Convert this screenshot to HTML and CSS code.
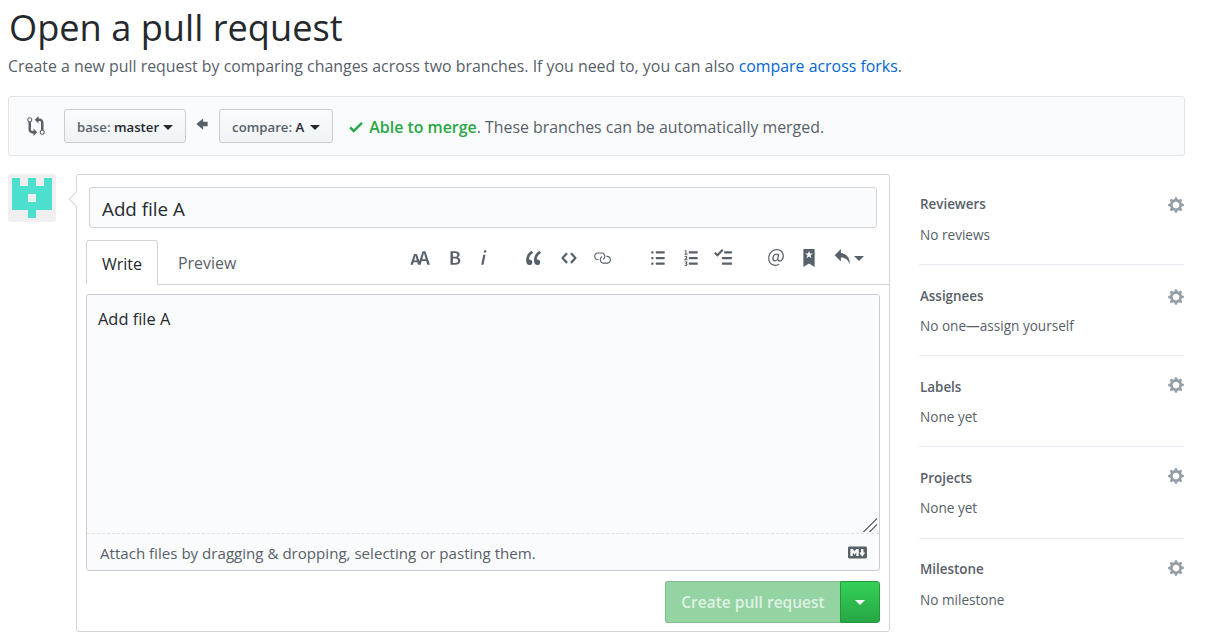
FILE: index.html
```html
<!DOCTYPE html>
<html lang="en">

<head>
    <meta charset="UTF-8">
    <title>Open a pull request</title>
    <link rel="stylesheet" href="styles.css">
</head>

<body>
    <h1>Open a pull request</h1>
    <p class="lead">Create a new pull request by comparing changes across two branches. If you need to, you can also <a href="#">compare across forks</a>.</p>

    <div class="range">
        <svg class="compare-icon" viewBox="0 0 14 16"><path d="M5 12H4c-.27-.02-.48-.11-.69-.31-.21-.2-.3-.42-.31-.69V4.72A1.993 1.993 0 0 0 2 1a1.993 1.993 0 0 0-1 3.72V11c.03.78.34 1.47.94 2.06.6.59 1.28.91 2.06.94h1v2l3-3-3-3v2zM2 1.8c.66 0 1.2.55 1.2 1.2 0 .65-.55 1.2-1.2 1.2C1.35 4.2.8 3.65.8 3c0-.65.55-1.2 1.2-1.2zm11 9.48V5c-.03-.78-.34-1.47-.94-2.06-.6-.59-1.28-.91-2.06-.94H9V0L6 3l3 3V4h1c.27.02.48.11.69.31.21.2.3.42.31.69v6.28A1.993 1.993 0 0 0 12 15a1.993 1.993 0 0 0 1-3.72zm-1 2.92c-.66 0-1.2-.55-1.2-1.2 0-.65.55-1.2 1.2-1.2.65 0 1.2.55 1.2 1.2 0 .65-.55 1.2-1.2 1.2z"/></svg>
        <button class="branch">base: <b>master</b><span class="caret"></span></button>
        <svg class="arrow-icon" viewBox="0 0 10 16"><path d="M6 3L0 8l6 5v-3h4V6H6z"/></svg>
        <button class="branch compare">compare: <b>A</b><span class="caret"></span></button>
        <div class="merge-status">
            <svg class="check-icon" viewBox="0 0 12 16"><path d="M12 5l-8 8-4-4 1.5-1.5L4 10l6.5-6.5z"/></svg>
            <strong>Able to merge</strong>. These branches can be automatically merged.
        </div>
    </div>

    <div class="main">
        <svg class="avatar" viewBox="0 0 48 48">
            <rect width="48" height="48" rx="3" fill="#f0f0f0"/>
            <path fill="#4ddfcd" fill-rule="evenodd" d="M4 4h8v8h8V4h8v8h8V4h8v32H28v8h-8v-8H4zM20 20v8h8v-8z"/>
        </svg>

        <div class="form-box">
            <input class="title-input" type="text" value="Add file A">

            <div class="tabs">
                <div class="tab active">Write</div>
                <div class="tab">Preview</div>
                <div class="toolbar">
                    <div class="tool-group">
                        <svg class="tool" width="21" viewBox="0 0 18 16"><path d="M13.62 9.08L12.1 3.66h-.06l-1.5 5.42h3.08zM5.7 10.13S4.68 6.52 4.53 6.02h-.08l-1.13 4.11H5.7zM17.31 14h-2.25l-.95-3.25h-4.07L9.09 14H6.84l-.69-2.33H2.87L2.17 14H0l3.3-9.59h2.5l2.17 6.34L10.86 2h2.52l3.94 12h-.01z"/></svg>
                        <svg class="tool" width="12" viewBox="0 0 10 16"><path d="M1 2h3.83c2.48 0 4.3.75 4.3 2.95 0 1.14-.63 2.23-1.67 2.61v.06c1.33.3 2.3 1.23 2.3 2.86 0 2.39-1.97 3.52-4.61 3.52H1V2zm3.66 4.95c1.67 0 2.38-.66 2.38-1.69 0-1.17-.78-1.61-2.34-1.61H3.13v3.3h1.53zm.27 5.39c1.77 0 2.75-.64 2.75-1.98 0-1.27-.95-1.81-2.75-1.81h-1.8v3.8h1.8v-.01z"/></svg>
                        <svg class="tool" width="7" viewBox="0 0 6 16"><path d="M2.81 5h1.98L3 14H1l1.81-9zm.36-2.7c0-.7.58-1.3 1.33-1.3.56 0 1.13.38 1.13 1.03 0 .75-.59 1.3-1.33 1.3-.58 0-1.13-.38-1.13-1.03z"/></svg>
                    </div>
                    <div class="tool-group">
                        <svg class="tool" width="16" viewBox="0 0 14 16"><path d="M6.16 3.5C3.73 5.06 2.55 6.67 2.55 9.36c.16-.05.3-.05.44-.05 1.27 0 2.5.86 2.5 2.41 0 1.61-1.03 2.61-2.5 2.61-1.9 0-2.99-1.52-2.99-4.25 0-3.8 1.75-6.53 5.02-8.42L6.16 3.5zm7 0c-2.43 1.56-3.61 3.17-3.61 5.86.16-.05.3-.05.44-.05 1.27 0 2.5.86 2.5 2.41 0 1.61-1.03 2.61-2.5 2.61-1.89 0-2.98-1.52-2.98-4.25 0-3.8 1.75-6.53 5.02-8.42l1.14 1.84h-.01z"/></svg>
                        <svg class="tool" width="16" viewBox="0 0 14 16"><path d="M9.5 3L8 4.5 11.5 8 8 11.5 9.5 13 14 8 9.5 3zm-5 0L0 8l4.5 5L6 11.5 2.5 8 6 4.5 4.5 3z"/></svg>
                        <svg class="tool" width="18" viewBox="0 0 16 16"><path d="M4 9h1v1H4c-1.5 0-3-1.69-3-3.5S2.55 3 4 3h4c1.45 0 3 1.69 3 3.5 0 1.41-.91 2.72-2 3.25V8.59c.58-.45 1-1.27 1-2.09C10 5.22 8.98 4 8 4H4c-.98 0-2 1.22-2 2.5S3 9 4 9zm9-3h-1v1h1c1 0 2 1.22 2 2.5S13.98 12 13 12H9c-.98 0-2-1.22-2-2.5 0-.83.42-1.64 1-2.09V6.25c-1.09.53-2 1.84-2 3.25C6 11.31 7.55 13 9 13h4c1.45 0 3-1.69 3-3.5S14.5 6 13 6z"/></svg>
                    </div>
                    <div class="tool-group">
                        <svg class="tool" width="14" viewBox="0 0 12 16"><path d="M2 13c0 .59 0 1-.59 1H.59C0 14 0 13.59 0 13c0-.59 0-1 .59-1h.81c.59 0 .59.41.59 1H2zm2.59-9h6.81c.59 0 .59-.41.59-1 0-.59 0-1-.59-1H4.59C4 2 4 2.41 4 3c0 .59 0 1 .59 1zM1.41 7H.59C0 7 0 7.41 0 8c0 .59 0 1 .59 1h.81c.59 0 .59-.41.59-1 0-.59 0-1-.59-1h.01zm0-5H.59C0 2 0 2.41 0 3c0 .59 0 1 .59 1h.81c.59 0 .59-.41.59-1 0-.59 0-1-.59-1h.01zm10 5H4.59C4 7 4 7.41 4 8c0 .59 0 1 .59 1h6.81c.59 0 .59-.41.59-1 0-.59 0-1-.59-1h.01zm0 5H4.59C4 12 4 12.41 4 13c0 .59 0 1 .59 1h6.81c.59 0 .59-.41.59-1 0-.59 0-1-.59-1h.01z"/></svg>
                        <svg class="tool" width="14" viewBox="0 0 12 16"><path d="M12.01 13c0 .59 0 1-.59 1H4.6c-.59 0-.59-.41-.59-1 0-.59 0-1 .59-1h6.81c.59 0 .59.41.59 1h.01zM4.6 4h6.81c.59 0 .59-.41.59-1 0-.59 0-1-.59-1H4.6c-.59 0-.59.41-.59 1 0 .59 0 1 .59 1zm6.81 3H4.6c-.59 0-.59.41-.59 1 0 .59 0 1 .59 1h6.81c.59 0 .59-.41.59-1 0-.59 0-1-.59-1zm-9.4-6h-.72c-.3.19-.58.25-1.03.34V2h.75v2.14H.17V5h2.84v-.86h-1V1zm.392 8.12c-.129 0-.592.04-.802.07.53-.56 1.14-1.25 1.14-1.89C2.72 6.52 2.18 6 1.38 6 .8 6 .42 6.2 0 6.67l.58.58c.19-.19.38-.38.64-.38.28 0 .48.16.48.52 0 .53-.77 1.2-1.7 2.06V10h3v-.88h-.598zm-.222 3.79v-.03c.44-.19.64-.47.64-.86 0-.7-.56-1.11-1.44-1.11-.48 0-.89.19-1.28.52l.55.64c.25-.2.44-.31.69-.31.27 0 .42.13.42.36 0 .27-.2.44-.86.44v.75c.83 0 .98.17.98.47 0 .25-.23.38-.58.38-.28 0-.56-.14-.81-.38l-.48.66c.3.36.77.56 1.41.56.83 0 1.53-.41 1.53-1.16-.02-.45-.27-.75-.77-.89v.02z"/></svg>
                        <svg class="tool" width="18" viewBox="0 0 16 16"><path d="M15.41 9H7.59C7 9 7 8.59 7 8c0-.59 0-1 .59-1h7.81c.59 0 .59.41.59 1 0 .59 0 1-.59 1h.01zM9.59 4C9 4 9 3.59 9 3c0-.59 0-1 .59-1h5.81c.59 0 .59.41.59 1 0 .59 0 1-.59 1H9.59zM0 3.91l1.41-1.3L3 4.2 7.09 0 8.5 1.41 3 6.91l-3-3zM7.59 12h7.81c.59 0 .59.41.59 1 0 .59 0 1-.59 1H7.59C7 14 7 13.59 7 13c0-.59 0-1 .59-1z"/></svg>
                    </div>
                    <div class="tool-group">
                        <svg class="tool" width="16" viewBox="0 0 14 16"><path d="M6.58 15c1.25 0 2.52-.31 3.56-.94l-.42-.94c-.84.52-1.89.83-3.03.83-3.23 0-5.64-2.08-5.64-5.72 0-4.37 3.23-7.18 6.58-7.18 3.45 0 5.22 2.19 5.22 5.2 0 2.39-1.34 3.86-2.5 3.86-1.05 0-1.36-.73-1.05-2.19l.73-3.75H8.98l-.11.72c-.41-.63-.94-.83-1.56-.83-2.19 0-3.66 2.39-3.66 4.38 0 1.67.94 2.61 2.3 2.61.84 0 1.67-.53 2.3-1.25.11.94.94 1.45 1.98 1.45 1.67 0 3.77-1.67 3.77-5C14 2.61 11.59 0 7.83 0 3.66 0 0 3.33 0 8.33 0 12.71 2.92 15 6.58 15zm-.31-5c-.73 0-1.36-.52-1.36-1.67 0-1.45.94-3.22 2.41-3.22.52 0 .84.2 1.25.83l-.52 3.02c-.63.73-1.25 1.04-1.78 1.04z"/></svg>
                        <svg class="tool" width="12" viewBox="0 0 10 16"><path d="M9 0H1C.27 0 0 .27 0 1v15l5-3.09L10 16V1c0-.73-.27-1-1-1zm-.78 4.25L6.36 5.61l.72 2.16c.06.22-.02.28-.2.17L5 6.6 3.12 7.94c-.19.11-.25.05-.2-.17l.72-2.16-1.86-1.36c-.17-.16-.14-.23.09-.23l2.3-.03.7-2.16h.25l.7 2.16 2.3.03c.23 0 .27.08.09.23h.01z"/></svg>
                        <div class="reply-tool">
                            <svg class="tool" width="16" viewBox="0 0 14 16"><path d="M6 3.5c3.92.44 8 3.125 8 10-2.312-5.062-4.75-6-8-6V11L.5 5.5 6 0v3.5z"/></svg>
                            <span class="caret"></span>
                        </div>
                    </div>
                </div>
            </div>

            <div class="write-area">
                <textarea class="body-input">Add file A</textarea>
                <div class="drag-hint">
                    <span>Attach files by dragging &amp; dropping, selecting or pasting them.</span>
                    <svg class="md-icon" viewBox="0 0 16 16"><path d="M14.85 3H1.15C.52 3 0 3.52 0 4.15v7.69C0 12.48.52 13 1.15 13h13.69c.64 0 1.15-.52 1.15-1.15v-7.7C16 3.52 15.48 3 14.85 3zM9 11H7V8L5.5 9.92 4 8v3H2V5h2l1.5 2L7 5h2v6zm2.99.5L9.5 8H11V5h2v3h1.5l-2.51 3.5z"/></svg>
                </div>
            </div>

            <div class="form-actions">
                <button class="btn-create" disabled>Create pull request</button>
                <button class="btn-drop"><span class="caret"></span></button>
            </div>
        </div>

        <div class="sidebar">
            <div class="side-item">
                <div class="side-head">Reviewers <svg class="gear" viewBox="0 0 14 16"><path d="M14 8.77v-1.6l-1.94-.64-.45-1.09.88-1.84-1.13-1.13-1.81.91-1.09-.45-.69-1.92h-1.6l-.63 1.94-1.11.45-1.84-.88-1.13 1.13.91 1.81-.45 1.09L0 7.23v1.59l1.94.64.45 1.09-.88 1.84 1.13 1.13 1.81-.91 1.09.45.69 1.92h1.59l.63-1.94 1.11-.45 1.84.88 1.13-1.13-.92-1.81.47-1.09L14 8.75v.02zM7 11c-1.66 0-3-1.34-3-3s1.34-3 3-3 3 1.34 3 3-1.34 3-3 3z"/></svg></div>
                <div class="side-text">No reviews</div>
            </div>
            <div class="side-item">
                <div class="side-head">Assignees <svg class="gear" viewBox="0 0 14 16"><path d="M14 8.77v-1.6l-1.94-.64-.45-1.09.88-1.84-1.13-1.13-1.81.91-1.09-.45-.69-1.92h-1.6l-.63 1.94-1.11.45-1.84-.88-1.13 1.13.91 1.81-.45 1.09L0 7.23v1.59l1.94.64.45 1.09-.88 1.84 1.13 1.13 1.81-.91 1.09.45.69 1.92h1.59l.63-1.94 1.11-.45 1.84.88 1.13-1.13-.92-1.81.47-1.09L14 8.75v.02zM7 11c-1.66 0-3-1.34-3-3s1.34-3 3-3 3 1.34 3 3-1.34 3-3 3z"/></svg></div>
                <div class="side-text">No one—assign yourself</div>
            </div>
            <div class="side-item">
                <div class="side-head">Labels <svg class="gear" viewBox="0 0 14 16"><path d="M14 8.77v-1.6l-1.94-.64-.45-1.09.88-1.84-1.13-1.13-1.81.91-1.09-.45-.69-1.92h-1.6l-.63 1.94-1.11.45-1.84-.88-1.13 1.13.91 1.81-.45 1.09L0 7.23v1.59l1.94.64.45 1.09-.88 1.84 1.13 1.13 1.81-.91 1.09.45.69 1.92h1.59l.63-1.94 1.11-.45 1.84.88 1.13-1.13-.92-1.81.47-1.09L14 8.75v.02zM7 11c-1.66 0-3-1.34-3-3s1.34-3 3-3 3 1.34 3 3-1.34 3-3 3z"/></svg></div>
                <div class="side-text">None yet</div>
            </div>
            <div class="side-item">
                <div class="side-head">Projects <svg class="gear" viewBox="0 0 14 16"><path d="M14 8.77v-1.6l-1.94-.64-.45-1.09.88-1.84-1.13-1.13-1.81.91-1.09-.45-.69-1.92h-1.6l-.63 1.94-1.11.45-1.84-.88-1.13 1.13.91 1.81-.45 1.09L0 7.23v1.59l1.94.64.45 1.09-.88 1.84 1.13 1.13 1.81-.91 1.09.45.69 1.92h1.59l.63-1.94 1.11-.45 1.84.88 1.13-1.13-.92-1.81.47-1.09L14 8.75v.02zM7 11c-1.66 0-3-1.34-3-3s1.34-3 3-3 3 1.34 3 3-1.34 3-3 3z"/></svg></div>
                <div class="side-text">None yet</div>
            </div>
            <div class="side-item">
                <div class="side-head">Milestone <svg class="gear" viewBox="0 0 14 16"><path d="M14 8.77v-1.6l-1.94-.64-.45-1.09.88-1.84-1.13-1.13-1.81.91-1.09-.45-.69-1.92h-1.6l-.63 1.94-1.11.45-1.84-.88-1.13 1.13.91 1.81-.45 1.09L0 7.23v1.59l1.94.64.45 1.09-.88 1.84 1.13 1.13 1.81-.91 1.09.45.69 1.92h1.59l.63-1.94 1.11-.45 1.84.88 1.13-1.13-.92-1.81.47-1.09L14 8.75v.02zM7 11c-1.66 0-3-1.34-3-3s1.34-3 3-3 3 1.34 3 3-1.34 3-3 3z"/></svg></div>
                <div class="side-text">No milestone</div>
            </div>
        </div>
    </div>
</body>

</html>
```

FILE: styles.css
```css
body {
    font-family: "Open Sans", "Noto Sans", sans-serif;
    font-size: 16px;
    color: #24292e;
    margin: 0;
    padding: 0 25px 0 8px;
    background: #fff;
}

h1 {
    font-size: 36.2px;
    font-weight: 400;
    line-height: 44px;
    margin: 5px 0 0;
    padding-left: 1px;
}

.lead {
    font-size: 15.9px;
    line-height: 22px;
    color: #586069;
    margin: 6px 0 19px;
}

.lead a {
    color: #0366d6;
    text-decoration: none;
}

/* compare bar */
.range {
    display: flex;
    align-items: center;
    height: 60px;
    box-sizing: border-box;
    padding-left: 18px;
    background: #fafbfc;
    border: 1px solid #e1e4e8;
    border-radius: 3px;
}

.compare-icon {
    width: 18px;
    height: 20px;
    fill: #586069;
    margin-right: 19px;
}

.branch {
    height: 34px;
    padding: 1px 12px 0;
    font: 600 13.2px "Open Sans", "Noto Sans", sans-serif;
    color: #586069;
    background: linear-gradient(#fafbfc, #eff3f6);
    border: 1px solid #c9ccd0;
    border-radius: 3px;
}

.branch b {
    color: #24292e;
    font-weight: 600;
}

.branch.compare .caret {
    margin-left: 6px;
}

.caret {
    display: inline-block;
    width: 0;
    height: 0;
    margin-left: 4px;
    vertical-align: middle;
    border-style: solid;
    border-width: 5px 5px 0;
    border-color: #24292e transparent transparent;
}

.arrow-icon {
    width: 12px;
    height: 18px;
    fill: #586069;
    margin: -4px 11px 0 10px;
}

.merge-status {
    margin-left: 16px;
    padding-top: 1px;
    font-size: 15.9px;
    color: #586069;
}

.merge-status strong {
    color: #28a745;
    font-weight: 600;
}

.check-icon {
    width: 14px;
    height: 18px;
    margin-right: 2px;
    fill: #28a745;
    vertical-align: -3px;
}

/* main area */
.main {
    display: flex;
    align-items: flex-start;
    margin-top: 18px;
}

.avatar {
    width: 48px;
    height: 48px;
    flex: none;
}

.form-box {
    position: relative;
    width: 814px;
    height: 458px;
    box-sizing: border-box;
    margin-left: 20px;
    padding: 12px 9px 0;
    border: 1px solid #d1d5da;
    border-radius: 3px;
    background: #fff;
}

.form-box::before {
    content: "";
    position: absolute;
    top: 18px;
    left: -6px;
    width: 11px;
    height: 11px;
    background: #fff;
    border-left: 1px solid #d1d5da;
    border-bottom: 1px solid #d1d5da;
    transform: rotate(45deg);
}

.title-input {
    display: block;
    box-sizing: border-box;
    width: 788px;
    height: 41px;
    margin-left: 3px;
    padding: 2px 12px 0;
    font: 18.8px "Open Sans", "Noto Sans", sans-serif;
    color: #24292e;
    background: #fafbfc;
    border: 1px solid #d1d5da;
    border-radius: 3px;
}

.tabs {
    display: flex;
    align-items: flex-end;
    height: 45px;
    margin: 11px -9px 0 0;
    border-bottom: 1px solid #d1d5da;
}

.tab {
    height: 45px;
    box-sizing: border-box;
    padding: 0 19px;
    line-height: 47px;
    font-size: 15.9px;
    color: #586069;
    border: 1px solid transparent;
}

.tab.active {
    height: 45px;
    margin-bottom: -1px;
    padding: 0 15px;
    line-height: 46px;
    font-size: 16px;
    color: #24292e;
    background: #fff;
    border-color: #d1d5da #d1d5da #fff;
    border-radius: 3px 3px 0 0;
}

.toolbar {
    display: flex;
    align-items: center;
    gap: 37.5px;
    margin-left: auto;
    margin-right: 25px;
    height: 38px;
    align-self: flex-start;
}

.tool-group {
    display: flex;
    align-items: center;
    gap: 18.5px;
}

/* nudges so each icon lands where the reference has it */
.tool-group:nth-child(2),
.tool-group:nth-child(3) {
    margin-left: 2px;
}

.tool-group:nth-child(2) .tool:nth-child(3) {
    margin-left: -2px;
}

.tool-group:nth-child(3) .tool:nth-child(2) {
    margin-left: 1px;
}

.tool-group:nth-child(3) .tool:nth-child(3) {
    margin-left: -3px;
}

.tool-group:nth-child(4) {
    margin-left: -1px;
}

.tool {
    height: 18px;
    fill: #586069;
    display: block;
}

.reply-tool {
    display: flex;
    align-items: center;
    margin-left: 1px;
}

.reply-tool .caret {
    border-top-color: #586069;
    margin-left: 4px;
}

.write-area {
    margin-top: 9px;
    width: 794px;
    background: #fafbfc;
    border: 1px solid #c8ccd1;
    border-radius: 3px;
    box-sizing: border-box;
}

.body-input {
    display: block;
    box-sizing: border-box;
    width: 100%;
    height: 239px;
    padding: 12px 11px;
    font: 16.4px/24px "Open Sans", "Noto Sans", sans-serif;
    color: #24292e;
    background-color: #fafbfc;
    background-image: linear-gradient(135deg, transparent 47%, #777 47%, #777 54%, transparent 54%, transparent 70%, #777 70%, #777 77%, transparent 77%);
    background-repeat: no-repeat;
    background-size: 14px 14px;
    background-position: right 2px bottom 1px;
    border: 0;
    border-bottom: 1px dashed #dfe2e5;
    border-radius: 3px 3px 0 0;
    outline: 0;
    resize: none;
}

.drag-hint {
    display: flex;
    align-items: center;
    justify-content: space-between;
    height: 36px;
    padding: 0 12px 0 13px;
    font-size: 15.1px;
    color: #586069;
}

.drag-hint span {
    padding-top: 1px;
}

.md-icon {
    width: 19px;
    height: 19px;
    fill: #586069;
}

.form-actions {
    display: flex;
    justify-content: flex-end;
    width: 794px;
    margin-top: 10px;
}

.btn-create {
    width: 175px;
    height: 42px;
    font: 600 15.5px "Open Sans", "Noto Sans", sans-serif;
    color: #dff2e4;
    background: #94d3a2;
    border: 1px solid #7fb98e;
    border-right: 0;
    border-radius: 3px 0 0 3px;
}

.btn-drop {
    width: 40px;
    height: 42px;
    padding: 0;
    background: linear-gradient(#34d058, #28a745);
    border: 1px solid #24963f;
    border-radius: 0 3px 3px 0;
}

.btn-drop .caret {
    margin: 0;
    border-top-color: #fff;
}

/* sidebar */
.sidebar {
    width: 265px;
    margin-left: 29px;
    padding-top: 18.4px;
}

.side-item {
    height: 72.7px;
    box-sizing: border-box;
    padding: 1px 0 0 1px;
    margin-bottom: 18.5px;
    border-bottom: 1px solid #e6ebf1;
}

.side-item:last-child {
    border-bottom: 0;
}

.side-head {
    display: flex;
    justify-content: space-between;
    align-items: center;
    font-size: 13.4px;
    font-weight: 600;
    line-height: 22px;
    color: #586069;
}

.gear {
    width: 16px;
    height: 18px;
    fill: #959da5;
    margin-top: 2px;
}

.side-item:nth-child(n+3) .gear {
    margin-top: -3px;
}

.side-text {
    font-size: 13.6px;
    line-height: 20px;
    margin-top: 9.4px;
    color: #586069;
}
```
